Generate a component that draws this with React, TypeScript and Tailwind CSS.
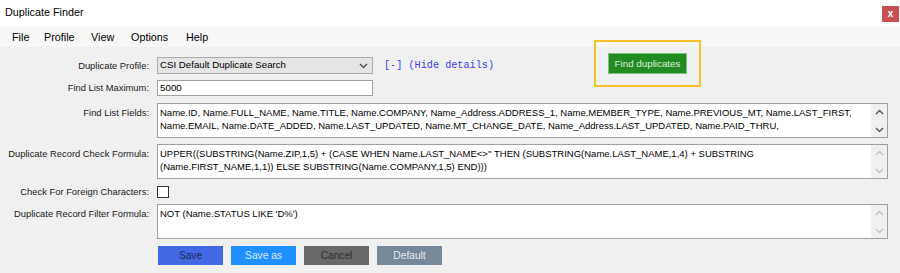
import React from 'react';

const Chevron: React.FC<{ dir: 'up' | 'down'; color: string }> = ({ dir, color }) => (
  <svg width="9" height="6" viewBox="0 0 9 6" fill="none">
    <path
      d={dir === 'up' ? 'M1 5 L4.5 1.5 L8 5' : 'M1 1 L4.5 4.5 L8 1'}
      stroke={color}
      strokeWidth="1.5"
    />
  </svg>
);

const TextBox: React.FC<{ lines: string[]; active?: boolean }> = ({ lines, active }) => (
  <div className="h-[35px] border border-[#a0a0a0] bg-white flex">
    <div className="flex-1 pl-[2px] pt-[2px] text-[9.5px] leading-[13px] whitespace-nowrap overflow-hidden">
      {lines.map((l, i) => (
        <div key={i}>{l}</div>
      ))}
    </div>
    <div className="w-[16px] bg-[#f0f0f0] flex flex-col items-center justify-between pt-[5px] pb-[4px]">
      <Chevron dir="up" color={active ? '#5a5a5a' : '#c4c4c4'} />
      <Chevron dir="down" color={active ? '#5a5a5a' : '#c4c4c4'} />
    </div>
  </div>
);

const Label: React.FC<{ children: React.ReactNode; className?: string }> = ({ children, className = '' }) => (
  <div className={`w-[149px] shrink-0 text-right text-[9.4px] text-[#1a1a1a] ${className}`}>{children}</div>
);

export default function App() {
  const menus = [
    { name: 'File', w: 'w-[32px]' },
    { name: 'Profile', w: 'w-[47px]' },
    { name: 'View', w: 'w-[40px]' },
    { name: 'Options', w: 'w-[55px]' },
    { name: 'Help', w: 'w-[40px]' },
  ];

  return (
    <div className="w-[900px] h-[273px] bg-[#f0f0f0] relative overflow-hidden font-['Liberation_Sans',Arial,sans-serif] text-black">
      {/* Title bar */}
      <div className="h-[27px] bg-white flex items-start justify-between">
        <span className="ml-[5px] mt-[6px] text-[10.8px] leading-[13px]">Duplicate Finder</span>
        <div className="mt-[6px] mr-[1px] w-[17px] h-[16px] bg-[#c75050] text-white text-[10px] font-bold leading-[15px] text-center">
          x
        </div>
      </div>

      {/* Menu bar */}
      <div className="h-[20px] bg-[#f7f7f7] flex items-center pl-[12px] text-[10.8px]">
        {menus.map((m) => (
          <span key={m.name} className={`${m.w} shrink-0`}>
            {m.name}
          </span>
        ))}
      </div>

      {/* Form */}
      <div className="pt-[6px] pr-[12px]">
        <div className="flex items-start h-[21px]">
          <Label className="mt-[4px] leading-[17px]">Duplicate Profile:</Label>
          <div className="ml-[8px] mt-[4px] w-[216px] h-[17px] bg-[#e5e5e5] border border-[#acacac] flex items-center justify-between pl-[2px] pr-[4px] text-[9.7px]">
            <span>CSI Default Duplicate Search</span>
            <Chevron dir="down" color="#555" />
          </div>
          <div className="ml-[11px] mt-[4px] w-[224px] leading-[17px] text-[10.2px] text-[#3a3af0] font-['Liberation_Mono','Courier_New',monospace]">
            [-] (Hide details)
          </div>
          <button className="w-[79px] h-[21px] bg-[#228b22] border border-[#7cc47c] text-[#dcefdc] text-[9.8px] leading-[19px]">
            Find duplicates
          </button>
        </div>

        <div className="flex items-center mt-[6px]">
          <Label>Find List Maximum:</Label>
          <div className="ml-[8px] w-[216px] h-[16px] bg-white border border-[#a0a0a0] pl-[2px] text-[9.8px] leading-[14px]">
            5000
          </div>
        </div>

        <div className="flex items-start mt-[7px]">
          <Label className="pt-[3px]">Find List Fields:</Label>
          <div className="ml-[8px] flex-1">
            <TextBox
              active
              lines={[
                'Name.ID, Name.FULL_NAME, Name.TITLE, Name.COMPANY, Name_Address.ADDRESS_1, Name.MEMBER_TYPE, Name.PREVIOUS_MT, Name.LAST_FIRST,',
                'Name.EMAIL, Name.DATE_ADDED, Name.LAST_UPDATED, Name.MT_CHANGE_DATE, Name_Address.LAST_UPDATED, Name.PAID_THRU,',
              ]}
            />
          </div>
        </div>

        <div className="flex items-start mt-[6px]">
          <Label className="pt-[3px]">Duplicate Record Check Formula:</Label>
          <div className="ml-[8px] flex-1">
            <TextBox
              lines={[
                "UPPER((SUBSTRING(Name.ZIP,1,5) + (CASE WHEN Name.LAST_NAME<>'' THEN (SUBSTRING(Name.LAST_NAME,1,4) + SUBSTRING",
                '(Name.FIRST_NAME,1,1)) ELSE SUBSTRING(Name.COMPANY,1,5) END)))',
              ]}
            />
          </div>
        </div>

        <div className="flex items-center mt-[6px]">
          <Label>Check For Foreign Characters:</Label>
          <div className="ml-[8px] w-[12px] h-[12px] bg-white border border-[#333]" />
        </div>

        <div className="flex items-start mt-[5px]">
          <Label className="pt-[3px]">Duplicate Record Filter Formula:</Label>
          <div className="ml-[8px] flex-1">
            <TextBox lines={["NOT (Name.STATUS LIKE 'D%')"]} />
          </div>
        </div>

        <div className="flex gap-[8px] ml-[158px] mt-[7px] text-[10.2px]">
          <button className="w-[65px] h-[19px] bg-[#4169e1] text-[#1c2a5e]">Save</button>
          <button className="w-[65px] h-[19px] bg-[#1e90ff] text-[#d6e9ff]">Save as</button>
          <button className="w-[65px] h-[19px] bg-[#696969] text-[#2e2e2e]">Cancel</button>
          <button className="w-[65px] h-[19px] bg-[#778899] text-[#e4e8ee]">Default</button>
        </div>
      </div>

      {/* Highlight annotation */}
      <div className="absolute left-[594px] top-[40px] w-[107px] h-[47px] border-2 border-[#f7c229] pointer-events-none" />
    </div>
  );
}
